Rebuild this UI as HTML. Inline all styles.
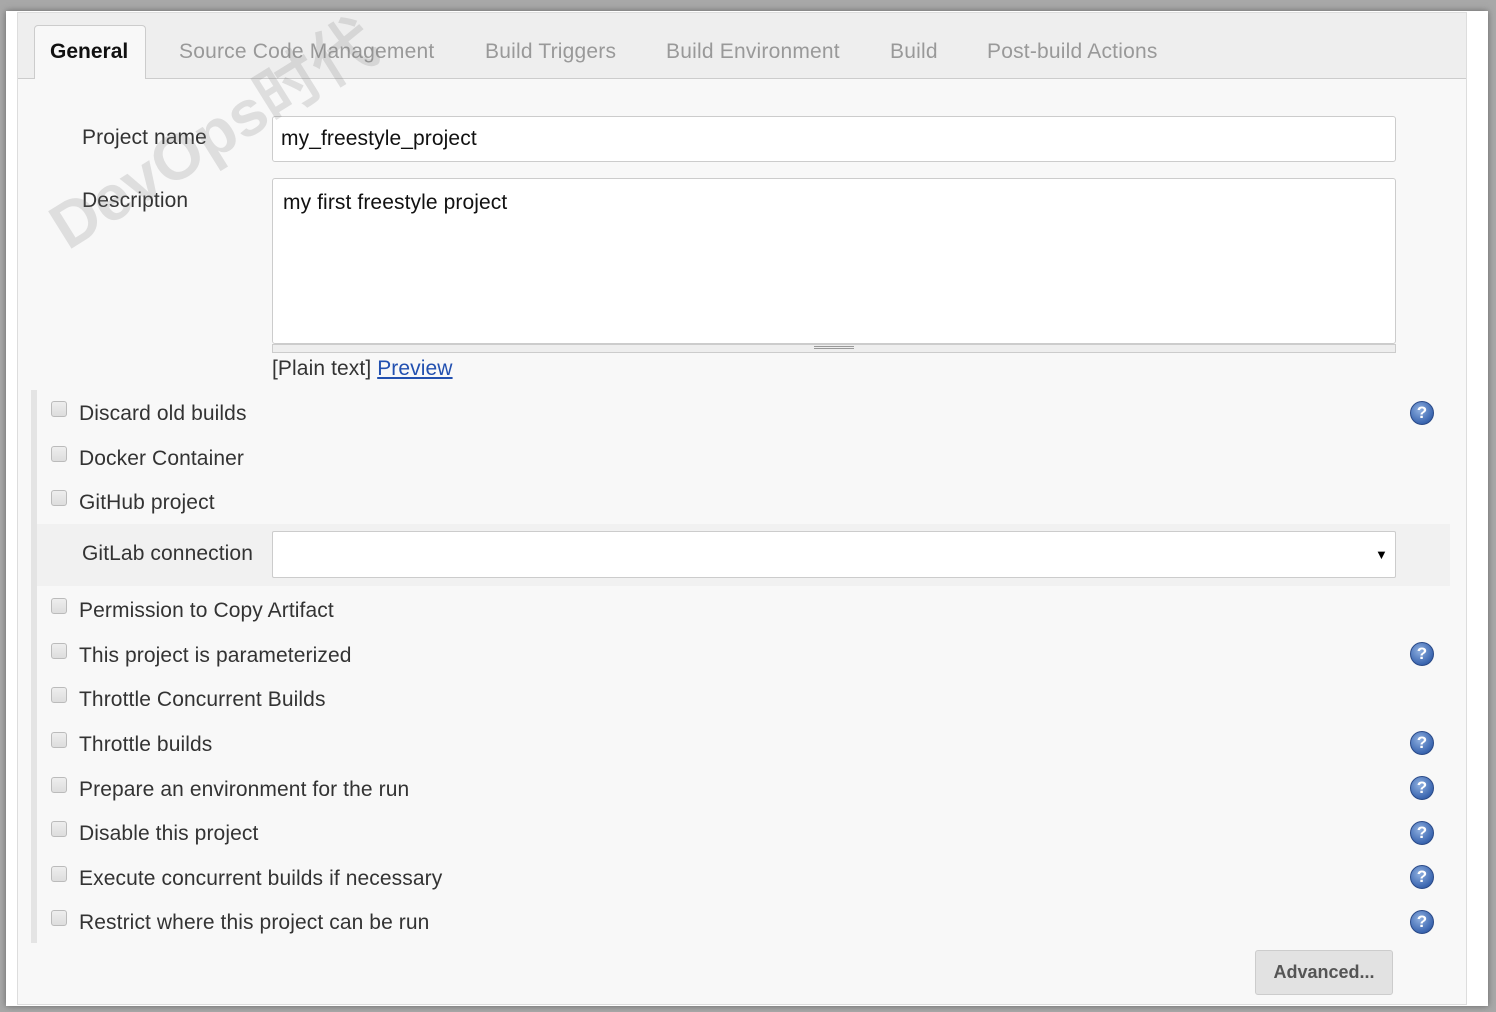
<!DOCTYPE html>
<html><head><meta charset="utf-8"><style>
*{box-sizing:border-box;margin:0;padding:0}
body{width:1496px;height:1012px;background:#a8a8a8;position:relative;overflow:hidden;font-family:"Liberation Sans",Arial,sans-serif;color:#333}
.card{position:absolute;left:6px;top:11px;width:1482px;height:995px;background:#fff;box-shadow:0 0 6px #666}
.panel{position:absolute;left:17px;top:12px;width:1450px;height:993px;background:#f8f8f8;border:1px solid #ddd}
.tabs{position:absolute;left:18px;top:13px;width:1448px;height:66px;background:#eee;border-bottom:1px solid #ccc}
.tab{position:absolute;top:40px;font-size:21px;letter-spacing:0.2px;color:#999}
.active{position:absolute;left:34px;top:25px;width:112px;height:54px;background:#f8f8f8;border:1px solid #ccc;border-bottom:none;border-radius:4px 4px 0 0}
.t{position:absolute;font-size:21px;letter-spacing:0.1px;color:#333}
.inp{position:absolute;background:#fff;border:1px solid #ccc;border-radius:3px}
.cb{position:absolute;left:51px;width:16px;height:16px;border:1px solid #bbb;border-radius:3px;background:linear-gradient(#eee,#ddd)}
.help{position:absolute;left:1410px;width:24px;height:24px;border-radius:50%;background:radial-gradient(circle at 40% 35%,#8fb0e0,#3b66b0 70%,#2a4a88);border:1px solid #2a4a88;color:#fff;font:bold 17px "Liberation Sans",sans-serif;text-align:center;line-height:22px}
</style></head><body>
<div class="card"></div>
<div class="panel"></div>
<div class="tabs"></div>
<div class="active"></div>
<div class="tab" style="left:50px;color:#111;font-weight:bold;top:40px;letter-spacing:0">General</div>
<div class="tab" style="left:179px">Source Code Management</div>
<div class="tab" style="left:485px">Build Triggers</div>
<div class="tab" style="left:666px">Build Environment</div>
<div class="tab" style="left:890px">Build</div>
<div class="tab" style="left:987px">Post-build Actions</div>
<div class="t" style="left:82px;top:126px">Project name</div>
<div class="inp" style="left:272px;top:116px;width:1124px;height:46px"></div>
<div class="t" style="left:281px;top:127px;color:#111">my_freestyle_project</div>
<div class="t" style="left:82px;top:189px">Description</div>
<div class="inp" style="left:272px;top:178px;width:1124px;height:166px"></div>
<div style="position:absolute;left:272px;top:344px;width:1124px;height:9px;background:#eee;border:1px solid #ccc"></div>
<div style="position:absolute;left:814px;top:346px;width:40px;height:3px;border-top:1px solid #999;border-bottom:1px solid #999"></div>
<div class="t" style="left:283px;top:191px;color:#111">my first freestyle project</div>
<div class="t" style="left:272px;top:357px">[Plain text] <span style="color:#2250b0;text-decoration:underline">Preview</span></div>
<div style="position:absolute;left:31px;top:390px;width:6px;height:553px;background:#e4e4e4"></div>
<div style="position:absolute;left:37px;top:524px;width:1413px;height:62px;background:#f1f1f1"></div>
<div class="t" style="left:82px;top:542px">GitLab connection</div>
<div class="inp" style="left:272px;top:531px;width:1124px;height:47px;border-radius:2px"></div>
<div style="position:absolute;left:1375px;top:547px;font-size:13px;color:#000">▼</div>
<div class="cb" style="top:401px"></div><div class="t" style="left:79px;top:402px">Discard old builds</div>
<div class="cb" style="top:446px"></div><div class="t" style="left:79px;top:447px">Docker Container</div>
<div class="cb" style="top:490px"></div><div class="t" style="left:79px;top:491px">GitHub project</div>
<div class="cb" style="top:598px"></div><div class="t" style="left:79px;top:599px">Permission to Copy Artifact</div>
<div class="cb" style="top:643px"></div><div class="t" style="left:79px;top:644px">This project is parameterized</div>
<div class="cb" style="top:687px"></div><div class="t" style="left:79px;top:688px">Throttle Concurrent Builds</div>
<div class="cb" style="top:732px"></div><div class="t" style="left:79px;top:733px">Throttle builds</div>
<div class="cb" style="top:777px"></div><div class="t" style="left:79px;top:778px">Prepare an environment for the run</div>
<div class="cb" style="top:821px"></div><div class="t" style="left:79px;top:822px">Disable this project</div>
<div class="cb" style="top:866px"></div><div class="t" style="left:79px;top:867px">Execute concurrent builds if necessary</div>
<div class="cb" style="top:910px"></div><div class="t" style="left:79px;top:911px">Restrict where this project can be run</div>
<div class="help" style="top:401px">?</div>
<div class="help" style="top:642px">?</div>
<div class="help" style="top:731px">?</div>
<div class="help" style="top:776px">?</div>
<div class="help" style="top:821px">?</div>
<div class="help" style="top:865px">?</div>
<div class="help" style="top:910px">?</div>
<div style="position:absolute;left:1255px;top:950px;width:138px;height:45px;background:#e2e2e2;border:1px solid #ccc;border-radius:3px;font-weight:bold;font-size:18px;color:#555;text-align:center;line-height:43px">Advanced...</div>
<div style="position:absolute;left:78px;font-size:64px;font-weight:bold;color:rgba(120,120,120,0.2);transform:rotate(-32deg);transform-origin:0 100%;top:175px">DevOps时代</div>
</body></html>
